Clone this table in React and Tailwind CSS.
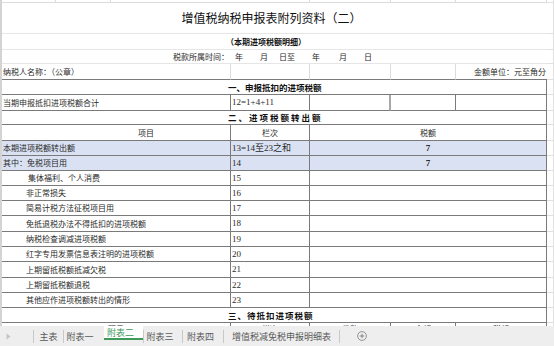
import React from "react";

const cjk = "font-['Noto_Sans_CJK_SC',sans-serif]";
const serif = "font-['Liberation_Serif','Noto_Sans_CJK_SC',serif]";
const dark = "border-b border-r border-[#7a7a7a]";

const body = [
  { h: "h-[15px]", label: "本期进项税额转出额", col: "13=14至23之和", val: "7", blue: true, pad: "pl-px" },
  { h: "h-[15px]", label: "其中：免税项目用", col: "14", val: "7", blue: true, pad: "pl-px" },
  { h: "h-[15px]", label: "集体福利、个人消费", col: "15", pad: "pl-[26px]" },
  { h: "h-[15px]", label: "非正常损失", col: "16", pad: "pl-[24px]" },
  { h: "h-[15px]", label: "简易计税方法征税项目用", col: "17", pad: "pl-[24px]" },
  { h: "h-[16px]", label: "免抵退税办法不得抵扣的进项税额", col: "18", pad: "pl-[24px]" },
  { h: "h-[15px]", label: "纳税检查调减进项税额", col: "19", pad: "pl-[24px]" },
  { h: "h-[15px]", label: "红字专用发票信息表注明的进项税额", col: "20", pad: "pl-[24px]" },
  { h: "h-[16px]", label: "上期留抵税额抵减欠税", col: "21", pad: "pl-[24px]" },
  { h: "h-[15px]", label: "上期留抵税额退税", col: "22", pad: "pl-[24px]" },
  { h: "h-[15px]", label: "其他应作进项税额转出的情形", col: "23", pad: "pl-[24px]" },
];

const tabs = ["主表", "附表一", "附表二", "附表三", "附表四", "增值税减免税申报明细表"];

function Tail() {
  return <div className="w-[7px] shrink-0 border-r border-b border-[#e1e1e1]" />;
}

function Section({ h, size, children }) {
  return (
    <div className={"flex shrink-0 " + h}>
      <div className={"w-[545px] shrink-0 flex items-center pl-[226px] font-bold text-[#111] leading-none " + dark + " " + size}>
        {children}
      </div>
      <Tail />
    </div>
  );
}

function BodyRow({ h, label, col, val, blue, pad }) {
  const bg = blue ? "bg-[#d9e1f2]" : "bg-white";
  return (
    <div className={"flex shrink-0 " + h}>
      <div className={"w-[229px] shrink-0 flex items-center leading-none " + dark + " " + bg + " " + pad}>{label}</div>
      <div className={"w-[79px] shrink-0 flex items-center pl-px text-[9px] leading-none whitespace-nowrap " + serif + " " + dark + " " + bg}>{col}</div>
      <div className={"w-[237px] shrink-0 flex items-center justify-center text-[9px] font-bold leading-none " + serif + " " + dark + " " + bg}>{val}</div>
      <Tail />
    </div>
  );
}

function TabBar() {
  return (
    <div className={"h-[20px] bg-[#eeeeee] flex items-center text-[9px] text-[#5a5a5a] leading-none " + cjk}>
      <div className="w-[33px] shrink-0 pl-[6px] flex items-center">
        <svg width="5" height="7" viewBox="0 0 5 7"><path d="M0.5 0.5 L4.5 3.5 L0.5 6.5 Z" fill="#c4c4c4" /></svg>
      </div>
      <div className="w-px h-[13px] bg-[#c8c8c8]" />
      <div className="w-[29px] shrink-0 text-center">{tabs[0]}</div>
      <div className="w-px h-[13px] bg-[#c8c8c8]" />
      <div className="w-[40px] shrink-0 text-center pr-[8px]">{tabs[1]}</div>
      <div className="w-[39px] shrink-0 self-start h-[14px] bg-white border-b-2 border-[#3f9a5a] text-[#3f9a5a] flex items-center justify-center pr-[6px]">{tabs[2]}</div>
      <div className="w-px h-[13px] bg-[#c8c8c8]" />
      <div className="w-[38px] shrink-0 text-center pr-[6px]">{tabs[3]}</div>
      <div className="w-px h-[13px] bg-[#c8c8c8]" />
      <div className="w-[40px] shrink-0 text-center pr-[5px]">{tabs[4]}</div>
      <div className="w-px h-[13px] bg-[#c8c8c8]" />
      <div className="w-[115px] shrink-0 text-center whitespace-nowrap">{tabs[5]}</div>
      <div className="w-px h-[13px] bg-[#c8c8c8]" />
      <svg className="ml-[17px]" width="10" height="10" viewBox="0 0 10 10">
        <circle cx="5" cy="5" r="4.4" fill="none" stroke="#8a8a8a" strokeWidth="0.9" />
        <path d="M5 2.8 V7.2 M2.8 5 H7.2" stroke="#7a7a7a" strokeWidth="0.9" />
      </svg>
    </div>
  );
}

export default function App() {
  return (
    <div className={"w-[554px] h-[346px] overflow-hidden bg-white text-[8px] text-[#2a2a2a] " + cjk}>
      <div className="h-[326px] flex overflow-hidden">
        <div className="w-[2px] shrink-0 bg-[#d4d4d4]" />
        <div className="w-[552px] shrink-0 flex flex-col">
          {/* top sliver of the row above */}
          <div className="flex h-[3px] shrink-0">
            <div className="w-[54px] shrink-0 border-r border-b border-[#dcdcdc]" />
            <div className="w-[55px] shrink-0 border-r border-b border-[#dcdcdc]" />
            <div className="w-[199px] shrink-0 border-r border-b border-[#dcdcdc]" />
            <div className="w-[81px] shrink-0 border-r border-b border-[#dcdcdc]" />
            <div className="w-[65px] shrink-0 border-r border-b border-[#dcdcdc]" />
            <div className="w-[91px] shrink-0 border-r border-b border-[#dcdcdc]" />
            <Tail />
          </div>

          <div className="flex h-[31px] shrink-0">
            <div className="w-[545px] shrink-0 flex items-center justify-center pr-[6px] border-b border-[#e6e6e6] text-[12px] text-[#111] leading-none">
              增值税纳税申报表附列资料（二）
            </div>
            <Tail />
          </div>

          <div className="flex h-[16px] shrink-0">
            <div className="w-[545px] shrink-0 flex items-center pl-[224px] border-b border-[#e6e6e6] font-bold text-[#111] leading-none">
              （本期进项税额明细）
            </div>
            <Tail />
          </div>

          <div className="flex h-[14px] shrink-0">
            <div className="w-[545px] shrink-0 flex items-center pl-[171px] border-b border-[#e6e6e6] leading-none">
              <span>税款所属时间：</span>
              <span className="ml-[6px]">年</span>
              <span className="ml-[17px]">月</span>
              <span className="ml-[11px]">日至</span>
              <span className="ml-[17px]">年</span>
              <span className="ml-[19px]">月</span>
              <span className="ml-[17px]">日</span>
            </div>
            <Tail />
          </div>

          <div className="flex h-[16px] shrink-0">
            <div className="w-[229px] shrink-0 flex items-center pl-px border-b border-b-[#7a7a7a] border-r border-r-[#dcdcdc] leading-none">纳税人名称：（公章）</div>
            <div className="w-[79px] shrink-0 border-b border-b-[#7a7a7a] border-r border-r-[#dcdcdc]" />
            <div className="w-[81px] shrink-0 border-b border-b-[#7a7a7a] border-r border-r-[#dcdcdc]" />
            <div className="w-[65px] shrink-0 border-b border-b-[#7a7a7a] border-r border-r-[#dcdcdc]" />
            <div className="w-[91px] shrink-0 flex items-center justify-end pr-px border-b border-b-[#7a7a7a] leading-none whitespace-nowrap">金额单位：元至角分</div>
            <Tail />
          </div>

          <Section h="h-[15px]" size="text-[8.5px]">一、申报抵扣的进项税额</Section>

          <div className="flex h-[16px] shrink-0">
            <div className={"w-[229px] shrink-0 flex items-center pl-px leading-none " + dark}>当期申报抵扣进项税额合计</div>
            <div className={"w-[79px] shrink-0 flex items-center pl-px text-[9px] leading-none " + serif + " " + dark}>12=1+4+11</div>
            <div className="w-[81px] shrink-0 border-b border-b-[#7a7a7a] border-r-2 border-r-[#a8a8a8]" />
            <div className={"w-[65px] shrink-0 " + dark} />
            <div className={"w-[91px] shrink-0 " + dark} />
            <Tail />
          </div>

          <Section h="h-[14px]" size="text-[8.5px] tracking-[2px]">二、进项税额转出额</Section>

          <div className="flex h-[16px] shrink-0">
            <div className={"w-[229px] shrink-0 flex items-center pl-[136px] leading-none " + dark}>项目</div>
            <div className={"w-[79px] shrink-0 flex items-center justify-center leading-none " + dark}>栏次</div>
            <div className={"w-[237px] shrink-0 flex items-center justify-center leading-none " + dark}>税额</div>
            <Tail />
          </div>

          {body.map((r) => (
            <BodyRow key={r.col} {...r} />
          ))}

          <Section h="h-[15px]" size="text-[8.5px] tracking-[1px]">三、待抵扣进项税额</Section>

          <div className="flex h-[15px] shrink-0">
            <div className={"w-[229px] shrink-0 flex justify-center pt-[2px] leading-none " + dark}>项目</div>
            <div className={"w-[79px] shrink-0 flex justify-center pt-[2px] leading-none " + dark}>栏次</div>
            <div className={"w-[81px] shrink-0 flex justify-center pt-[2px] leading-none " + dark}>份数</div>
            <div className={"w-[65px] shrink-0 flex justify-center pt-[2px] leading-none " + dark}>金额</div>
            <div className={"w-[91px] shrink-0 flex justify-center pt-[2px] leading-none " + dark}>税额</div>
            <Tail />
          </div>
        </div>
      </div>
      <TabBar />
    </div>
  );
}
